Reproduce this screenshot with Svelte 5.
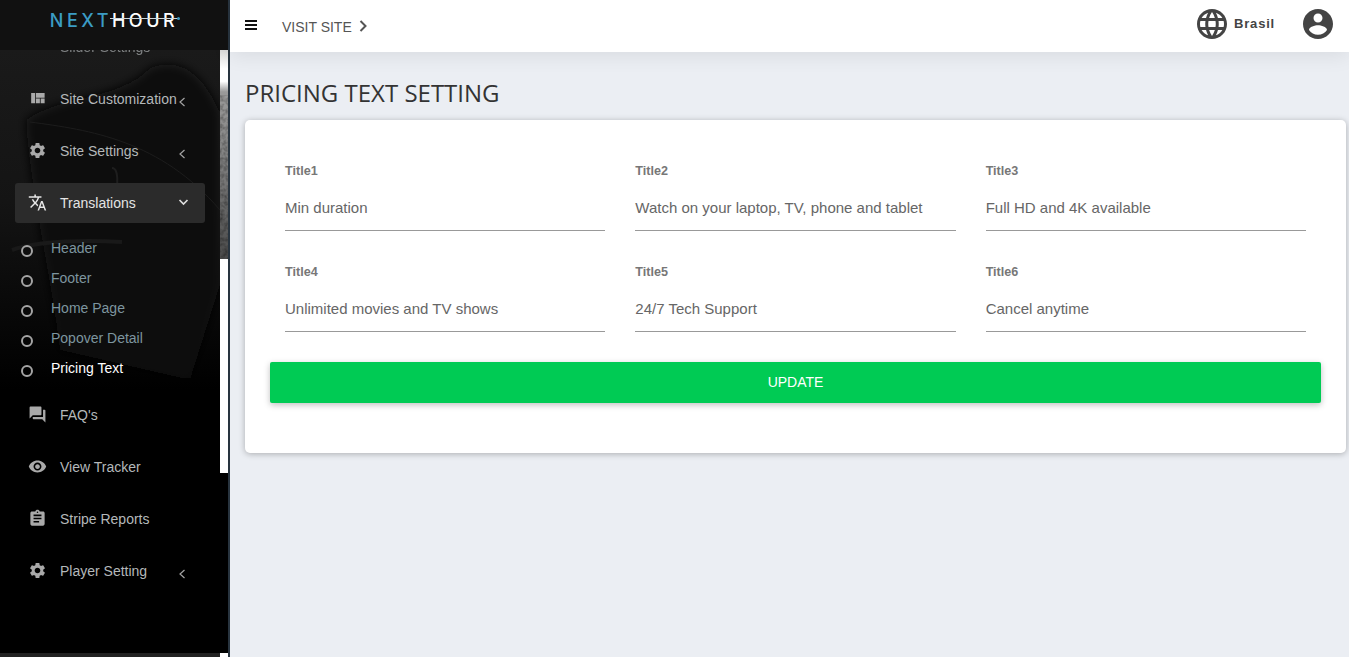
<script>
  const icons = {
    quilt: "M10 18h5v-6h-5v6zm-6 0h5V5H4v13zm12 0h5v-6h-5v6zM10 5v6h11V5H10z",
    settings: "M19.14 12.94c.04-.3.06-.61.06-.94 0-.32-.02-.64-.07-.94l2.03-1.58c.18-.14.23-.41.12-.61l-1.92-3.32c-.12-.22-.37-.29-.59-.22l-2.39.96c-.5-.38-1.03-.7-1.62-.94l-.36-2.54c-.04-.24-.24-.41-.48-.41h-3.84c-.24 0-.43.17-.47.41l-.36 2.54c-.59.24-1.13.57-1.62.94l-2.39-.96c-.22-.08-.47 0-.59.22L2.74 8.87c-.12.21-.08.47.12.61l2.03 1.58c-.05.3-.09.63-.09.94s.02.64.07.94l-2.03 1.58c-.18.14-.23.41-.12.61l1.92 3.32c.12.22.37.29.59.22l2.39-.96c.5.38 1.03.7 1.62.94l.36 2.54c.05.24.24.41.48.41h3.84c.24 0 .44-.17.47-.41l.36-2.54c.59-.24 1.13-.56 1.62-.94l2.39.96c.22.08.47 0 .59-.22l1.92-3.32c.12-.22.07-.47-.12-.61l-2.01-1.58zM12 15.6c-1.98 0-3.6-1.62-3.6-3.6s1.62-3.6 3.6-3.6 3.6 1.62 3.6 3.6-1.62 3.6-3.6 3.6z",
    translate: "M12.87 15.07l-2.54-2.51.03-.03c1.74-1.94 2.98-4.17 3.71-6.53H17V4h-7V2H8v2H1v1.99h11.17C11.5 7.92 10.44 9.75 9 11.35 8.07 10.32 7.3 9.19 6.69 8h-2c.73 1.63 1.73 3.17 2.98 4.56l-5.09 5.02L4 19l5-5 3.11 3.11.76-2.04zM18.5 10h-2L12 22h2l1.12-3h4.75L21 22h2l-4.5-12zm-2.62 7l1.62-4.33L19.12 17h-3.24z",
    forum: "M21 6h-2v9H6v2c0 .55.45 1 1 1h11l4 4V7c0-.55-.45-1-1-1zm-4 6V3c0-.55-.45-1-1-1H3c-.55 0-1 .45-1 1v14l4-4h10c.55 0 1-.45 1-1z",
    eye: "M12 4.5C7 4.5 2.73 7.61 1 12c1.73 4.39 6 7.5 11 7.5s9.27-3.11 11-7.5c-1.73-4.39-6-7.5-11-7.5zM12 17c-2.76 0-5-2.24-5-5s2.24-5 5-5 5 2.24 5 5-2.24 5-5 5zm0-8c-1.66 0-3 1.34-3 3s1.34 3 3 3 3-1.34 3-3-1.34-3-3-3z",
    assignment: "M19 3h-4.18C14.4 1.84 13.3 1 12 1c-1.3 0-2.4.84-2.82 2H5c-1.1 0-2 .9-2 2v14c0 1.1.9 2 2 2h14c1.1 0 2-.9 2-2V5c0-1.1-.9-2-2-2zm-7 0c.55 0 1 .45 1 1s-.45 1-1 1-1-.45-1-1 .45-1 1-1zm2 14H7v-2h7v2zm3-4H7v-2h10v2zm0-4H7V7h10v2z",
    list: "M4 11h16v2H4z"
  };
  const account = "M12 2C6.48 2 2 6.48 2 12s4.48 10 10 10 10-4.48 10-10S17.52 2 12 2zm0 3c1.66 0 3 1.34 3 3s-1.34 3-3 3-3-1.34-3-3 1.34-3 3-3zm0 14.2c-2.5 0-4.71-1.28-6-3.22.03-1.99 4-3.08 6-3.08 1.99 0 5.97 1.09 6 3.08-1.29 1.94-3.5 3.22-6 3.22z";
  const globe = "M11.99 2C6.47 2 2 6.48 2 12s4.47 10 9.99 10C17.52 22 22 17.52 22 12S17.52 2 11.99 2zm6.93 6h-2.95c-.32-1.25-.78-2.45-1.38-3.56 1.84.63 3.37 1.91 4.33 3.56zM12 4.04c.83 1.2 1.48 2.53 1.91 3.96h-3.82c.43-1.43 1.08-2.76 1.91-3.96zM4.26 14C4.1 13.36 4 12.69 4 12s.1-1.36.26-2h3.38c-.08.66-.14 1.32-.14 2 0 .68.06 1.34.14 2H4.26zm.82 2h2.95c.32 1.25.78 2.45 1.38 3.56-1.84-.63-3.37-1.9-4.33-3.56zm2.95-8H5.08c.96-1.66 2.49-2.93 4.33-3.56C8.81 5.55 8.35 6.75 8.03 8zM12 19.96c-.83-1.2-1.48-2.53-1.91-3.96h3.82c-.43 1.43-1.08 2.76-1.91 3.96zM14.34 14H9.66c-.09-.66-.16-1.32-.16-2 0-.68.07-1.35.16-2h4.68c.09.65.16 1.32.16 2 0 .68-.07 1.34-.16 2zm.25 5.56c.6-1.11 1.06-2.31 1.38-3.56h2.95c-.96 1.65-2.49 2.93-4.33 3.56zM16.36 14c.08-.66.14-1.32.14-2 0-.68-.06-1.34-.14-2h3.38c.16.64.26 1.31.26 2s-.1 1.36-.26 2h-3.38z";

  const before = [
    { label: "Slider Settings", icon: "list", dim: true },
    { label: "Site Customization", icon: "quilt", caret: true },
    { label: "Site Settings", icon: "settings", caret: true }
  ];
  const subs = [
    { label: "Header" },
    { label: "Footer" },
    { label: "Home Page" },
    { label: "Popover Detail" },
    { label: "Pricing Text", current: true }
  ];
  const after = [
    { label: "FAQ's", icon: "forum" },
    { label: "View Tracker", icon: "eye" },
    { label: "Stripe Reports", icon: "assignment" },
    { label: "Player Setting", icon: "settings", caret: true }
  ];
  const fields = [
    { label: "Title1", value: "Min duration" },
    { label: "Title2", value: "Watch on your laptop, TV, phone and tablet" },
    { label: "Title3", value: "Full HD and 4K available" },
    { label: "Title4", value: "Unlimited movies and TV shows" },
    { label: "Title5", value: "24/7 Tech Support" },
    { label: "Title6", value: "Cancel anytime" }
  ];
</script>

{#snippet item(it)}
  <li class="item" class:dim={it.dim}>
    <svg class="icon" viewBox="0 0 24 24"><path d={icons[it.icon]} /></svg>
    <span class="label">{it.label}</span>
    {#if it.caret}
      <svg class="caret" viewBox="0 0 8 12"><path d="M6.5 2 2 6 6.5 10" /></svg>
    {/if}
  </li>
{/snippet}

<div class="page">
  <aside class="sidebar">
    <div class="logo">
      <span class="wordmark"><span class="next">NEXT</span><span class="hour">HOUR</span><i class="swoosh"></i><i class="tip"></i></span>
    </div>
    <div class="scroller">
      <svg class="photo" viewBox="0 0 228 607" preserveAspectRatio="none" aria-hidden="true">
        <defs>
          <linearGradient id="fade" x1="0" y1="0" x2="0" y2="1">
            <stop offset="0" stop-color="#1a1a1a" />
            <stop offset="0.25" stop-color="#141414" />
            <stop offset="0.42" stop-color="#090909" />
            <stop offset="0.56" stop-color="#000" />
          </linearGradient>
          <linearGradient id="strip" x1="0" y1="0" x2="0" y2="1">
            <stop offset="0" stop-color="#d8d8d8" />
            <stop offset="0.09" stop-color="#fff" />
            <stop offset="0.15" stop-color="#fff" />
            <stop offset="0.2" stop-color="#9a9a9a" />
            <stop offset="0.55" stop-color="#7e7e7e" />
            <stop offset="1" stop-color="#4a4a4a" />
          </linearGradient>
          <filter id="grain" x="0" y="0" width="100%" height="100%">
            <feTurbulence type="fractalNoise" baseFrequency="0.25" numOctaves="2" seed="4" />
            <feColorMatrix values="0 0 0 0 0  0 0 0 0 0  0 0 0 0 0  0 0 0 .7 -0.25" />
          </filter>
          <filter id="soft" x="-20%" y="-20%" width="140%" height="140%">
            <feGaussianBlur stdDeviation="5" />
          </filter>
        </defs>
        <rect width="228" height="607" fill="url(#fade)" />
        <path d="M26 70 C60 45 120 50 150 18 C185 5 205 30 220 62 L220 235 L190 330 L60 300 C50 220 30 140 26 70Z" fill="#0a0a0a" filter="url(#soft)" />
        <path d="M30 72 C90 80 160 90 220 160" fill="none" stroke="#1c1c1c" stroke-width="1" />
        <path d="M112 118 C120 118 118 140 112 170" fill="none" stroke="#1e1e1e" stroke-width="2" />
        <path d="M12 200 C40 190 90 190 122 192" fill="none" stroke="#191919" stroke-width="4" />
        <rect x="220" width="8" height="209" fill="url(#strip)" />
        <rect x="220" y="45" width="8" height="164" filter="url(#grain)" />
      </svg>
      <ul class="nav">
        {#each before as it}
          {@render item(it)}
        {/each}
        <li class="item active">
          <svg class="icon" viewBox="0 0 24 24"><path d={icons.translate} /></svg>
          <span class="label">Translations</span>
          <svg class="open" viewBox="0 0 12 8"><path d="M2.5 2 6.5 6 10.5 2" /></svg>
        </li>
        <ul class="subs">
          {#each subs as s}
            <li class="sub" class:current={s.current}><i class="ring"></i><span>{s.label}</span></li>
          {/each}
        </ul>
        {#each after as it}
          {@render item(it)}
        {/each}
      </ul>
      <div class="thumb"></div>
      <div class="foot"></div>
    </div>
  </aside>

  <div class="body">
    <header class="topbar">
      <svg class="burger" viewBox="0 0 12 10"><path d="M0 0h12v2H0zM0 4h12v2H0zM0 8h12v2H0z" /></svg>
      <span class="visit">VISIT SITE</span>
      <svg class="visit-caret" viewBox="0 0 8 12"><path d="M1.5 1 6.5 6 1.5 11" /></svg>
      <div class="spacer"></div>
      <svg class="top-icon" viewBox="2 2 20 20"><path d={globe} /></svg>
      <span class="lang">Brasil</span>
      <svg class="top-icon user" viewBox="2 2 20 20"><path d={account} /></svg>
    </header>
    <main class="main">
      <h1>PRICING TEXT SETTING</h1>
      <section class="card">
        <div class="grid">
          {#each fields as f}
            <div class="field">
              <span class="field-label">{f.label}</span>
              <div class="input">{f.value}</div>
            </div>
          {/each}
        </div>
        <button class="update">UPDATE</button>
      </section>
    </main>
  </div>
</div>

<style>
  :global(body) { margin: 0; background: #ebeef3; font-family: "Liberation Sans", Arial, sans-serif; }
  .page { display: flex; width: 1349px; height: 657px; overflow: hidden; }

  .sidebar { width: 228px; flex: none; display: flex; flex-direction: column; background: #000; border-right: 2px solid #28343f; }
  .logo { height: 50px; flex: none; background: #111; display: flex; justify-content: center; padding-top: 12px; box-sizing: border-box; position: relative; z-index: 1; }
  .wordmark { position: relative; height: 18px; font: 500 18px/18px Inter, sans-serif; letter-spacing: 3.5px; white-space: nowrap; }
  .next { color: #3b9cc4; }
  .hour { color: #fff; }
  .swoosh { position: absolute; left: 60px; top: 6px; width: 68px; height: 1px; background: #cfd8dc; }
  .tip { position: absolute; left: 127px; top: 5px; width: 3px; height: 3px; border-radius: 50%; background: #3b9cc4; }
  .scroller { position: relative; flex: 1; overflow: hidden; }
  .photo { position: absolute; inset: 0; width: 228px; height: 607px; }
  .nav { position: relative; list-style: none; margin: -35px 0 0; padding: 0; width: 220px; }
  .item { display: flex; align-items: center; height: 40px; margin: 12px 15px; padding: 0 12.5px; border-radius: 3px; color: #b4b8ba; font-size: 14px; position: relative; }
  .item.dim { opacity: .65; }
  .item.active { background: #2b2b2b; color: #e4e4e4; }
  .icon { width: 19px; height: 19px; fill: #a9a9a9; flex: none; margin: -2px 13.5px 0 0; }
  .active .icon { fill: #e6e6e6; }
  .label { white-space: nowrap; }
  .caret { position: absolute; left: 163px; top: 17px; width: 8px; height: 12px; fill: none; stroke: #a3a3a3; stroke-width: 1.2; }
  .open { position: absolute; left: 162px; top: 15px; width: 12px; height: 8px; fill: none; stroke: #ddd; stroke-width: 1.7; }
  .subs { list-style: none; margin: -2px 0 0; padding: 0; }
  .sub { display: flex; align-items: center; height: 30px; padding-left: 21px; color: #7d959f; font-size: 14px; }
  .sub.current { color: #fff; }
  .ring { width: 8px; height: 8px; border: 2px solid #a5a5a5; border-radius: 50%; margin: 6px 18px 0 0; flex: none; }
  .thumb { position: absolute; left: 220px; top: 209px; width: 8px; height: 214px; background: #fff; }
  .foot { position: absolute; left: 0; right: 0; bottom: 0; height: 4px; background: linear-gradient(90deg, #222 220px, #fff 220px); }

  .body { flex: 1; min-width: 0; display: flex; flex-direction: column; }
  .topbar { height: 52px; flex: none; background: #fff; display: flex; align-items: center; padding: 0 16px 0 15px; box-sizing: border-box; position: relative; box-shadow: 0 4px 20px rgba(0, 0, 0, .08); }
  .burger { width: 12px; height: 10px; fill: #111; margin: -3px 25px 0 0; }
  .visit { color: #555; font-size: 14px; margin-top: 1px; }
  .visit-caret { width: 8px; height: 12px; margin: 0 0 0 7px; fill: none; stroke: #555; stroke-width: 2; }
  .spacer { flex: 1; }
  .top-icon { width: 30px; height: 30px; fill: #444; margin-top: -4px; }
  .lang { font: 700 13px "Liberation Sans", Arial, sans-serif; letter-spacing: .8px; color: #444; margin: -5px 28px 0 7px; }
  .main { flex: 1; padding: 0 3px 0 15px; }
  h1 { margin: 24px 0 0; height: 44px; font: 400 24px/34px "Open Sans", sans-serif; color: #333; }
  .card { height: 333px; box-sizing: border-box; background: #fff; border-radius: 5px; padding: 41px 25px 0; box-shadow: 0 1px 6px rgba(0, 0, 0, .28); }
  .grid { display: grid; grid-template-columns: repeat(3, 1fr); column-gap: 30px; row-gap: 31px; padding: 0 15px; }
  .field-label { display: block; font-size: 12.6px; line-height: 20px; height: 18px; font-weight: 700; color: #777; }
  .input { height: 52px; box-sizing: border-box; border-bottom: 1px solid #999; font-size: 15px; line-height: 24px; color: #666; padding-top: 17px; white-space: nowrap; }
  .update { display: block; width: 100%; height: 41px; margin-top: 30px; padding-bottom: 3px; border: 0; border-radius: 2px; background: #00cb54; color: #fff; font: 400 14px "Liberation Sans", Arial, sans-serif; box-shadow: 0 2px 6px rgba(0, 0, 0, .25); }
</style>
